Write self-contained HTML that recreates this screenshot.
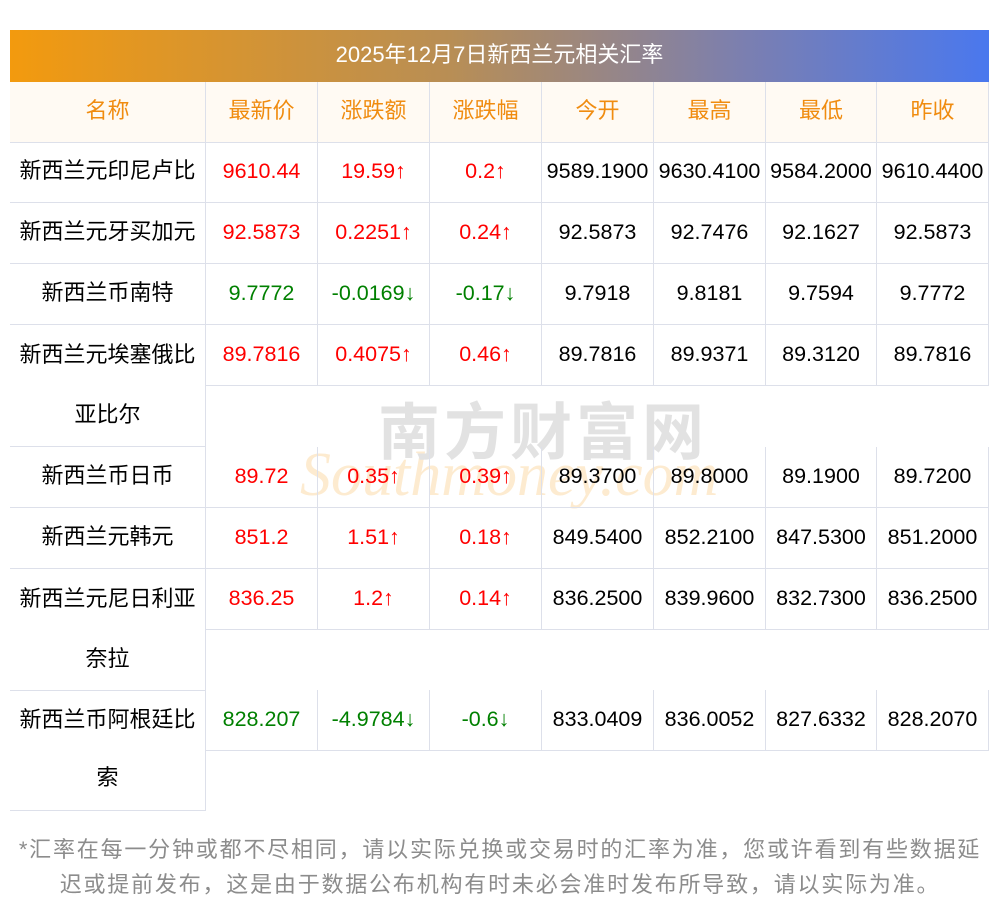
<!DOCTYPE html>
<html><head><meta charset="utf-8"><style>
body{margin:0;width:1000px;height:913px;background:#fff;position:relative;font-family:"Liberation Sans","Noto Sans CJK SC",sans-serif;overflow:hidden}
.t{position:absolute;left:10px;top:30px;width:979px;height:52px;background:linear-gradient(90deg,#f39a0e,#b88e55 45%,#7b7fb0 75%,#4a78ee);color:#fff;font-size:22px;line-height:50px;text-align:center}
.c{position:absolute;box-sizing:border-box;border-right:1px solid #dde0ea;border-bottom:1px solid #dde0ea;text-align:center;line-height:58px;font-size:21.5px;height:61px;width:112px;color:#000;white-space:nowrap}
.h{background:#fffaf3;color:#f08c10;font-size:22px;top:82px}
.n{left:10px;width:196px;font-size:22px}
.r{color:#f00}.g{color:#008000}
.f{position:absolute;left:0;width:1000px;text-align:center;color:#8c8c8c;font-size:22px;letter-spacing:1.8px;font-family:"Liberation Sans","Noto Sans CJK SC",sans-serif}
.wm1{position:absolute;left:378px;top:382px;font-size:62px;color:#e2e2e2;letter-spacing:4px;font-family:"Noto Sans CJK SC",sans-serif;font-weight:bold}
.wm2{position:absolute;left:300px;top:440px;font-size:62px;color:#fdebd0;font-style:italic;font-family:"Liberation Serif",serif}
</style></head><body>
<div class="wm2">Southmoney.com</div>
<div class="wm1">南方财富网</div>
<div class="t">2025年12月7日新西兰元相关汇率</div>

<div class="c h" style="left:10px;width:196px">名称</div>
<div class="c h" style="left:206px">最新价</div>
<div class="c h" style="left:318px">涨跌额</div>
<div class="c h" style="left:430px">涨跌幅</div>
<div class="c h" style="left:542px">今开</div>
<div class="c h" style="left:654px">最高</div>
<div class="c h" style="left:766px;width:111px">最低</div>
<div class="c h" style="left:877px">昨收</div>

<div class="c n" style="top:142px">新西兰元印尼卢比</div>
<div class="c r" style="left:206px;top:142px">9610.44</div>
<div class="c r" style="left:318px;top:142px">19.59↑</div>
<div class="c r" style="left:430px;top:142px">0.2↑</div>
<div class="c" style="left:542px;top:142px">9589.1900</div>
<div class="c" style="left:654px;top:142px">9630.4100</div>
<div class="c" style="left:766px;width:111px;top:142px">9584.2000</div>
<div class="c" style="left:877px;top:142px">9610.4400</div>

<div class="c n" style="top:203px">新西兰元牙买加元</div>
<div class="c r" style="left:206px;top:203px">92.5873</div>
<div class="c r" style="left:318px;top:203px">0.2251↑</div>
<div class="c r" style="left:430px;top:203px">0.24↑</div>
<div class="c" style="left:542px;top:203px">92.5873</div>
<div class="c" style="left:654px;top:203px">92.7476</div>
<div class="c" style="left:766px;width:111px;top:203px">92.1627</div>
<div class="c" style="left:877px;top:203px">92.5873</div>

<div class="c n" style="top:264px">新西兰币南特</div>
<div class="c g" style="left:206px;top:264px">9.7772</div>
<div class="c g" style="left:318px;top:264px">-0.0169↓</div>
<div class="c g" style="left:430px;top:264px">-0.17↓</div>
<div class="c" style="left:542px;top:264px">9.7918</div>
<div class="c" style="left:654px;top:264px">9.8181</div>
<div class="c" style="left:766px;width:111px;top:264px">9.7594</div>
<div class="c" style="left:877px;top:264px">9.7772</div>

<div class="c n" style="top:325px;height:122px;line-height:60px">新西兰元埃塞俄比<br>亚比尔</div>
<div class="c r" style="left:206px;top:325px">89.7816</div>
<div class="c r" style="left:318px;top:325px">0.4075↑</div>
<div class="c r" style="left:430px;top:325px">0.46↑</div>
<div class="c" style="left:542px;top:325px">89.7816</div>
<div class="c" style="left:654px;top:325px">89.9371</div>
<div class="c" style="left:766px;width:111px;top:325px">89.3120</div>
<div class="c" style="left:877px;top:325px">89.7816</div>

<div class="c n" style="top:447px">新西兰币日币</div>
<div class="c r" style="left:206px;top:447px">89.72</div>
<div class="c r" style="left:318px;top:447px">0.35↑</div>
<div class="c r" style="left:430px;top:447px">0.39↑</div>
<div class="c" style="left:542px;top:447px">89.3700</div>
<div class="c" style="left:654px;top:447px">89.8000</div>
<div class="c" style="left:766px;width:111px;top:447px">89.1900</div>
<div class="c" style="left:877px;top:447px">89.7200</div>

<div class="c n" style="top:508px">新西兰元韩元</div>
<div class="c r" style="left:206px;top:508px">851.2</div>
<div class="c r" style="left:318px;top:508px">1.51↑</div>
<div class="c r" style="left:430px;top:508px">0.18↑</div>
<div class="c" style="left:542px;top:508px">849.5400</div>
<div class="c" style="left:654px;top:508px">852.2100</div>
<div class="c" style="left:766px;width:111px;top:508px">847.5300</div>
<div class="c" style="left:877px;top:508px">851.2000</div>

<div class="c n" style="top:569px;height:122px;line-height:60px">新西兰元尼日利亚<br>奈拉</div>
<div class="c r" style="left:206px;top:569px">836.25</div>
<div class="c r" style="left:318px;top:569px">1.2↑</div>
<div class="c r" style="left:430px;top:569px">0.14↑</div>
<div class="c" style="left:542px;top:569px">836.2500</div>
<div class="c" style="left:654px;top:569px">839.9600</div>
<div class="c" style="left:766px;width:111px;top:569px">832.7300</div>
<div class="c" style="left:877px;top:569px">836.2500</div>

<div class="c n" style="top:690px;height:121px;border-top:1px solid #dde0ea;line-height:58px">新西兰币阿根廷比<br>索</div>
<div class="c g" style="left:206px;top:690px">828.207</div>
<div class="c g" style="left:318px;top:690px">-4.9784↓</div>
<div class="c g" style="left:430px;top:690px">-0.6↓</div>
<div class="c" style="left:542px;top:690px">833.0409</div>
<div class="c" style="left:654px;top:690px">836.0052</div>
<div class="c" style="left:766px;width:111px;top:690px">827.6332</div>
<div class="c" style="left:877px;top:690px">828.2070</div>

<div class="f" style="top:832px">*汇率在每一分钟或都不尽相同，请以实际兑换或交易时的汇率为准，您或许看到有些数据延</div>
<div class="f" style="top:867px">迟或提前发布，这是由于数据公布机构有时未必会准时发布所导致，请以实际为准。</div>
</body></html>
